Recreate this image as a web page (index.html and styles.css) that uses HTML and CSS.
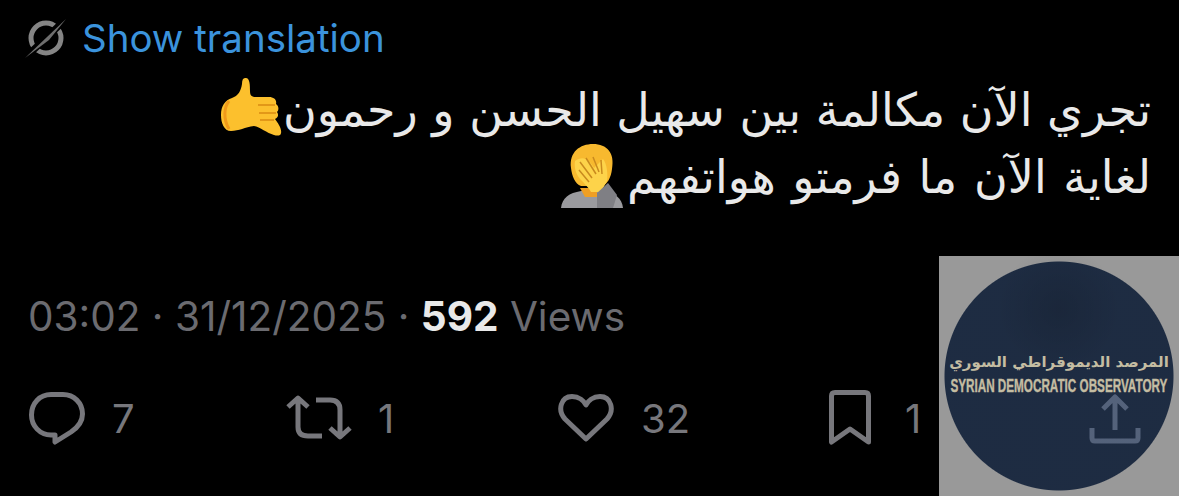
FILE: index.html
```html
<!DOCTYPE html>
<html lang="en">
<head>
    <meta charset="UTF-8">
    <meta name="viewport" content="width=device-width, initial-scale=1.0">
    <title>Post</title>
    <link rel="stylesheet" href="styles.css">
</head>
<body>
    <div class="post">
        <div class="translate-row">
            <svg class="translate-icon" width="44" height="44" viewBox="0 0 44 44">
                <circle cx="22" cy="22" r="15" fill="none" stroke="#858585" stroke-width="5"/>
                <path d="M2 41 L41 4" stroke="#000" stroke-width="7"/>
                <path d="M1 42 L23 21 L42 3 L25 24 Z" fill="#6e6e6e"/>
            </svg>
            <span class="translate-link">Show translation</span>
        </div>

        <div class="post-text" dir="rtl" lang="ar">
            <div class="post-line">تجري الآن مكالمة بين سهيل الحسن و رحمون<svg class="emoji emoji-hand" width="62" height="60" viewBox="0 0 62 60">
                    <path d="M24 1 C29 0 29 8 29 14 C29 19 31 20 36 20 H48 C53 20 56 23 55 27 C58 29 58 33 56 35 C58 38 57 41 54 42 C57 46 61 52 60 56 C60 59 56 59 53 58 C46 56 39 50 33 49 C24 50 18 54 10 54 C3 54 0 46 0 38 C0 29 4 23 11 21 C17 19 20 14 21 7 C21 3 22 1 24 1 Z" fill="#fcc02d"/>
                    <path d="M37 28 H54 M38 36 H55 M39 43 H53" stroke="#d98a12" stroke-width="1.6" fill="none"/>
                    <path d="M8 24 C3 30 2 42 8 52" stroke="#f09a1a" stroke-width="3" fill="none"/>
                </svg></div>
            <div class="post-line post-line-wide">لغاية الآن ما فرمتو هواتفهم<svg class="emoji emoji-face" width="62" height="64" viewBox="0 0 62 64">
                    <path d="M0 64 C1 54 8 49 20 47 H42 C54 49 61 54 62 64 Z" fill="#9a9a9e"/>
                    <path d="M10 24 C8 8 19 0 32 0 C46 0 54 9 51 25 C50 34 46 40 42 42 H20 C14 40 11 32 10 24 Z" fill="#f7b92f"/>
                    <path d="M19 44 H36 V53 H24 Z" fill="#ef9f24"/>
                    <path d="M14 17 C22 11 28 15 33 24 L42 15 C46 20 47 30 46 37 L40 48 L30 48 C28 44 24 40 19 35 C15 30 13 24 14 17 Z" fill="#fdd34a"/>
                    <path d="M19 18 L31 34 M25 14 L35 30 M32 13 L38 28 M40 16 L41 30 M18 26 L28 38" stroke="#c98a1e" stroke-width="1.5" fill="none"/>
                    <path d="M36 49 L47 39 L56 51 L52 64 H36 Z" fill="#7f7f84"/>
                </svg></div>
        </div>

        <div class="post-meta">03:02 · 31/12/2025 · <b>592</b> Views</div>

        <div class="post-stats">
            <div class="stat">
                <svg class="icon" width="58" height="56" viewBox="0 0 58 56"><path d="M23 4.5 H35 C46 4.5 54.5 13 54.5 24 C54.5 33 49 38 43 42 L27 52 V45 H23 C12 45 3.5 36 3.5 25 C3.5 13 12 4.5 23 4.5 Z"/></svg>
                <span>7</span>
            </div>
            <div class="stat stat-repost">
                <svg class="icon" width="70" height="50" viewBox="0 0 70 50"><path d="M4 14 L14 5 L24 14 M14 6 V34 Q14 43 24 43 H38 M32 7 H46 Q56 7 56 17 V44 M46 35 L56 44 L66 35"/></svg>
                <span>1</span>
            </div>
            <div class="stat">
                <svg class="icon" width="58" height="52" viewBox="0 0 58 52"><path d="M29 47 L8 27 C0 18 4 4.5 15 4.5 C22 4.5 27 9 29 13 C31 9 36 4.5 43 4.5 C54 4.5 58 18 50 27 Z"/></svg>
                <span>32</span>
            </div>
            <div class="stat stat-bookmark">
                <svg class="icon" width="46" height="60" viewBox="0 0 46 60"><path d="M4.5 54 V8 Q4.5 4.5 8 4.5 H38 Q41.5 4.5 41.5 8 V54 L23 41 Z"/></svg>
                <span>1</span>
            </div>
            <div class="stat">
                <svg class="icon" width="54" height="53" viewBox="0 0 54 53"><path d="M27 5 V38 M15 17 L27 5 L39 17 M4 36 V46 Q4 49 7 49 H47 Q50 49 50 46 V36"/></svg>
            </div>
        </div>
    </div>

    <!-- channel watermark sits over the bottom right corner -->
    <div class="watermark">
        <div class="watermark-ar" dir="rtl" lang="ar">المرصد الديموقراطي السوري</div>
        <div class="watermark-en">SYRIAN DEMOCRATIC OBSERVATORY</div>
    </div>
</body>
</html>
```

FILE: styles.css
```css
* {
    margin: 0;
    padding: 0;
    box-sizing: border-box;
}

body {
    width: 1179px;
    height: 496px;
    background: #000;
    overflow: hidden;
    position: relative;
    font-family: Inter, "Liberation Sans", sans-serif;
}

.post {
    padding: 14px 28px 0 24px;
}

.translate-row {
    display: flex;
    align-items: center;
    gap: 14px;
    height: 48px;
}

.translate-link {
    color: #3b93dc;
    font-size: 38.5px;
}

.post-text {
    margin-top: 14px;
    color: #e9e9e9;
    font-family: "DejaVu Sans", sans-serif;
    font-size: 46px;
}

.post-line {
    display: flex;
    align-items: center;
    height: 67px;
}

.post-line-wide {
    word-spacing: 2px;
}

.emoji {
    flex: none;
}

.emoji-hand {
    margin-top: -6px;
}

.emoji-face {
    margin-right: 4px;
    margin-top: -2px;
}

.post-meta {
    margin-top: 82px;
    margin-left: 4px;
    color: #6b6b70;
    font-size: 40.5px;
}

.post-meta b {
    color: #e9e9e9;
}

.post-stats {
    display: grid;
    grid-template-columns: 256px 273px 270px 261px 1fr;
    align-items: center;
    margin-top: 47px;
    margin-left: 4px;
}

.stat {
    display: flex;
    align-items: center;
    gap: 26px;
    color: #77777c;
    font-size: 40px;
}

.stat-repost {
    gap: 24px;
}

.stat-bookmark {
    gap: 32px;
}

.icon {
    fill: none;
    stroke: #77777c;
    stroke-width: 5;
    stroke-linejoin: round;
}

.watermark {
    position: absolute;
    left: 939px;
    top: 256px;
    width: 240px;
    height: 240px;
    background:
        radial-gradient(circle at 50% 22%, rgba(0, 0, 0, 0.12), transparent 28%),
        radial-gradient(circle at center, rgba(55, 81, 122, 0.54) 114px, rgba(255, 255, 255, 0.6) 115px);
    display: flex;
    flex-direction: column;
    align-items: center;
    justify-content: center;
    padding-bottom: 3px;
}

.watermark-ar {
    color: #c4bda2;
    font-family: "DejaVu Sans", sans-serif;
    font-weight: bold;
    font-size: 15px;
    white-space: nowrap;
}

.watermark-en {
    margin-top: 5px;
    color: #c4bda2;
    font-family: "Liberation Sans", sans-serif;
    font-weight: bold;
    font-size: 18px;
    white-space: nowrap;
    -webkit-text-stroke: 0.4px #c4bda2;
    transform: scaleX(0.65);
}
```
